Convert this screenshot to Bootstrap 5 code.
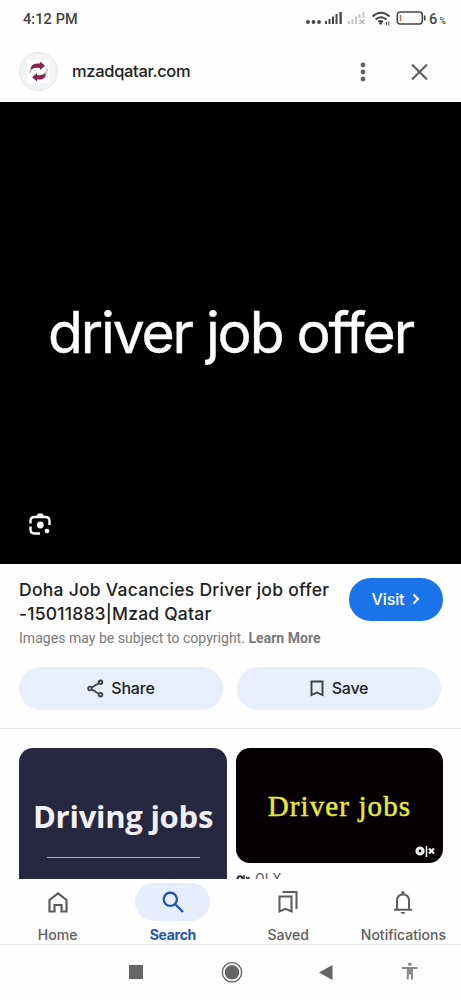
<!DOCTYPE html>
<html lang="en">
<head>
<meta charset="utf-8">
<meta name="viewport" content="width=device-width, initial-scale=1">
<title>driver job offer</title>
<link href="https://cdn.jsdelivr.net/npm/bootstrap@5.3.0/dist/css/bootstrap.min.css" rel="stylesheet">
<style>
body{font-family:Inter,Roboto,sans-serif;color:#202124;background:#fefefe;height:1000px;overflow:hidden}
svg{display:block;flex:none}
.status{height:41px;padding:0 14px 4px 23px;color:#424242;font:500 14.5px/1 Roboto,sans-serif}
.clock{padding-top:3px;letter-spacing:.1px}
.site{height:61px;padding:0 32px 0 19px}
.favicon{width:39px;height:39px;background:#f1f3f4;border:1px solid #e6e8ea}
.domain{font-size:16.5px;font-weight:500;margin-left:14px;letter-spacing:-.33px}
.close-icon{margin-left:43px}
.hero{height:462px;background:#000;color:#fff;font-size:57px;line-height:1;font-weight:400}
.hero-text{letter-spacing:-2.1px;padding-bottom:2px;-webkit-text-stroke:.4px #fff}
.lens{left:28px;bottom:28px}
.info{height:165px;padding:14px 20px 0 19px;border-bottom:1px solid #e4e5e7}
.title{font-size:17.5px;line-height:24px;font-weight:500;letter-spacing:.26px}
.title .t2{letter-spacing:.2px}
.note{font:400 14px/18px Roboto,sans-serif;color:#77797c;margin-top:3px;letter-spacing:.03px}
.visit{width:94px;height:43px;background:#1a73e8;color:#fff;font-size:16px;font-weight:500;margin-right:-2px;letter-spacing:-.1px;padding-bottom:1px}
.buttons{gap:14px;margin-top:20px}
.pill{height:43px;background:#e8effc;font-size:16px;font-weight:500;color:#202124;flex:1;padding-bottom:1px}
.share{margin-left:7px;letter-spacing:-.15px}
.save{margin-left:8px;letter-spacing:-.2px}
.results{height:150px;padding:19px 18px 0 19px;gap:9px}
.tile-a{width:208px;height:150px;border-radius:14px 14px 0 0;background:#27273f;color:#f1f0f7;font:700 31px/1 "Open Sans",sans-serif;padding-top:53px}
.driving{letter-spacing:-.25px}
.rule{width:153px;height:1px;background:#c3b174;margin-top:25px}
.tile-b{width:207px;height:115px;border-radius:14px;background:#050002;color:#e6e93c;font:400 29px/1 "Liberation Serif",serif}
.driver{letter-spacing:1.1px;-webkit-text-stroke:.5px #e6e93c;padding-top:1px}
.olx{right:8px;bottom:6px}
.source{font:400 14px/16px Roboto,sans-serif;color:#5f6368;margin-top:8px}
.olxname{margin-left:5px;letter-spacing:.2px}
.tabs{height:66px;background:#fefefe;border-bottom:1px solid #e6e6e6;color:#5c5d60;font-size:14px;line-height:17px;font-weight:500}
.tab{width:115.25px;padding-top:4px}
.ico{width:75px;height:38px}
.lab{margin-top:5px}
.tab.on{color:#1a56b0;font-weight:700}
.tab.on .lab{letter-spacing:-.3px}
.tab.on .ico{background:#e6edfc}
.keys{height:55px}
</style>
</head>
<body class="d-flex flex-column">
<header class="status d-flex align-items-center justify-content-between">
  <span class="clock">4:12 PM</span>
  <svg width="142" height="22" viewBox="305 8 142 22">
    <g fill="#444"><circle cx="308" cy="22" r="1.9"/><circle cx="313.5" cy="22" r="1.9"/><circle cx="319" cy="22" r="1.9"/>
    <path d="M325 21h2v3h-2zM328.500 19h2v5h-2zM332 16.500h2v7.500h-2zM335.500 14h2v10h-2zM339.500 12h2.300v12h-2.300z"/></g>
    <path fill="#c5c5c5" d="M348 21h2v3h-2zM351.500 19h2v5h-2zM355 16.500h2v7.500h-2zM358.500 14h2v4h-2zM362.500 12h2v6h-2z"/>
    <path d="M359.500 19.500l5 4.500m0-4.500l-5 4.500" stroke="#b5b5b5" stroke-width="1.500"/>
    <g fill="none" stroke="#444" stroke-width="2"><path d="M372.500 16.500q8.500-7.500 17 0M375.500 19.500q5.500-4.500 11 0"/><path d="M378.300 22q2.500-2 4.600 0" /></g><circle cx="380.700" cy="23.300" r="1.400" fill="#444"/>
    <path d="M386.500 22v3M388.800 21.500v4" stroke="#444" stroke-width="1"/>
    <rect x="397.300" y="12" width="25" height="12" rx="3" fill="none" stroke="#444" stroke-width="1.500"/><path d="M424.700 15.500v5" stroke="#444" stroke-width="1.700"/><path d="M400.500 15v6" stroke="#e66" stroke-width="1.500"/>
    <text x="429" y="23.500" font-size="14.500" fill="#444">6</text><text x="439.500" y="23.500" font-size="8.500" fill="#444">%</text>
  </svg>
</header>
<section class="site d-flex align-items-center">
  <div class="favicon rounded-circle d-flex align-items-center justify-content-center">
    <svg width="23" height="23" viewBox="0 0 23 23"><path fill="#fff" d="M0 0h23v23H0z"/><path d="M3 13q0-6 7-6.500M20 8.500q.5 5-7 7.500" stroke="#c9b3bf" stroke-width="1.500" fill="none"/><path fill="#862456" d="M3.500 9.500Q4 3.500 10 3.500h3V1.500l5 4.200-5 4.300V8q-5-1-9.500 1.500zM19 13.500q-.5 6-6 6h-3v2l-5-4.200 5-4.300v2q5 1 9-1.500z"/></svg>
  </div>
  <span class="domain">mzadqatar.com</span>
  <svg class="ms-auto" width="6" height="20" viewBox="0 0 6 20" fill="#5f6368"><circle cx="3" cy="3" r="2.400"/><circle cx="3" cy="10" r="2.400"/><circle cx="3" cy="17" r="2.400"/></svg>
  <svg class="close-icon" width="20" height="20" viewBox="0 0 20 20"><path d="M3 2.500l15 15m0-15l-15 15" stroke="#5f6368" stroke-width="2.200"/></svg>
</section>
<main>
  <section class="hero position-relative d-flex align-items-center justify-content-center">
    <span class="hero-text">driver job offer</span>
    <svg class="lens position-absolute" width="24" height="24" viewBox="28 512 24 24"><g fill="none" stroke="#fff" stroke-width="2.400"><path d="M30.500 523.500V521q0-4 4-4h11q4 0 4 4v4M30.500 526.500v3q0 4 4 4H40"/></g><path d="M36 517l2-3.500h4.500l2 3.500z" fill="#fff"/><circle cx="40.300" cy="525" r="3.400" fill="#fff"/><circle cx="47" cy="531" r="2.300" fill="#fff"/></svg>
  </section>
  <section class="info">
    <div class="d-flex justify-content-between align-items-start">
      <div class="text-nowrap">
        <div class="title"><span>Doha Job Vacancies Driver job offer</span><br><span class="t2">-15011883|Mzad Qatar</span></div>
        <div class="note">Images may be subject to copyright. <b>Learn More</b></div>
      </div>
      <a class="visit rounded-pill d-flex align-items-center justify-content-center text-decoration-none">Visit<svg class="ms-2" width="8" height="12" viewBox="0 0 8 12"><path d="M1.500 1.500L6 6l-4.500 4.500" fill="none" stroke="#fff" stroke-width="2"/></svg></a>
    </div>
    <div class="buttons d-flex">
      <div class="pill rounded-pill d-flex align-items-center justify-content-center"><svg width="17" height="19" viewBox="0 0 17 19" fill="none" stroke="#3c4043" stroke-width="1.800"><circle cx="3" cy="9.500" r="1.800"/><circle cx="13.500" cy="3.300" r="1.800"/><circle cx="13.500" cy="15.700" r="1.800"/><path d="M4.800 8.500l7-4.200M4.800 10.500l7 4.200"/></svg><span class="share">Share</span></div>
      <div class="pill rounded-pill d-flex align-items-center justify-content-center"><svg width="14" height="17" viewBox="0 0 14 17"><path d="M1.500 1.500h11v13.500L7 12.500 1.500 15z" fill="none" stroke="#3c4043" stroke-width="1.900"/></svg><span class="save">Save</span></div>
    </div>
  </section>
  <section class="results d-flex overflow-hidden">
    <div class="tile-a d-flex flex-column align-items-center flex-shrink-0"><span class="driving text-nowrap">Driving jobs</span><div class="rule"></div></div>
    <div>
      <div class="tile-b position-relative d-flex align-items-center justify-content-center"><span class="driver">Driver jobs</span>
        <svg class="olx position-absolute" width="20" height="12" viewBox="0 0 20 12"><circle cx="5" cy="6" r="3" fill="none" stroke="#eee" stroke-width="3.200"/><path d="M11.500 1v11" stroke="#eee" stroke-width="1.600"/><path d="M14 3.500l5 5m0-5l-5 5" stroke="#eee" stroke-width="2.300"/></svg></div>
      <div class="source d-flex"><svg width="14" height="14" viewBox="0 0 14 14"><circle cx="4" cy="7.500" r="2.300" fill="none" stroke="#263238" stroke-width="2"/><path d="M8 4v7M10 6l3.500 3.500m0-3.500L10 9.500" stroke="#263238" stroke-width="1.500"/></svg><span class="olxname">OLX</span></div>
    </div>
  </section>
</main>
<nav class="tabs d-flex text-center">
  <div class="tab d-flex flex-column align-items-center"><div class="ico rounded-pill d-flex align-items-center justify-content-center"><svg width="20" height="23" viewBox="0 0 20 23"><path d="M1.500 9L10 2.500 18.500 9v11.500h-5v-6.500h-7v6.500h-5z" fill="none" stroke="#5c5d60" stroke-width="2.200"/></svg></div><span class="lab">Home</span></div>
  <div class="tab on d-flex flex-column align-items-center"><div class="ico rounded-pill d-flex align-items-center justify-content-center"><svg width="22" height="22" viewBox="0 0 22 22" fill="none" stroke="#1a56b0" stroke-width="2.300"><circle cx="8.300" cy="8.300" r="6.600"/><path d="M13 13l8 8"/></svg></div><span class="lab">Search</span></div>
  <div class="tab d-flex flex-column align-items-center"><div class="ico rounded-pill d-flex align-items-center justify-content-center"><svg width="20" height="24" viewBox="0 0 20 24" fill="none" stroke="#5c5d60" stroke-width="2.100"><path d="M1.500 6.500h12v15l-6-2.700-6 2.700zM4.500 2h14v17"/></svg></div><span class="lab">Saved</span></div>
  <div class="tab d-flex flex-column align-items-center"><div class="ico rounded-pill d-flex align-items-center justify-content-center"><svg width="20" height="24" viewBox="0 0 20 24"><path d="M4 19.500V11q0-6.500 6-6.500t6 6.500v8.500M1 19.700h18" fill="none" stroke="#5c5d60" stroke-width="2"/><path d="M8.500 4V2.500a1.500 1.500 0 0 1 3 0V4zM7.500 22h5q-1 2-2.500 2t-2.500-2z" fill="#5c5d60"/></svg></div><span class="lab">Notifications</span></div>
</nav>
<footer class="keys">
  <svg width="461" height="55" viewBox="0 945 461 55"><rect x="129" y="965" width="14" height="14" rx=".5" fill="#656565"/><circle cx="232" cy="972.300" r="9.700" fill="none" stroke="#656565" stroke-width="1.400"/><circle cx="232" cy="972.300" r="7.300" fill="#656565"/><path d="M332.500 965v15l-13.500-7.500z" fill="#656565"/><g fill="#8a8a8a"><circle cx="409.800" cy="964.200" r="1.800"/><path d="M402 967h15.500v1.900h-4.500v10.600h-2v-5h-2.200v5h-2v-10.600H402z"/></g></svg>
</footer>
<script src="https://cdn.jsdelivr.net/npm/bootstrap@5.3.0/dist/js/bootstrap.bundle.min.js"></script>
</body>
</html>
